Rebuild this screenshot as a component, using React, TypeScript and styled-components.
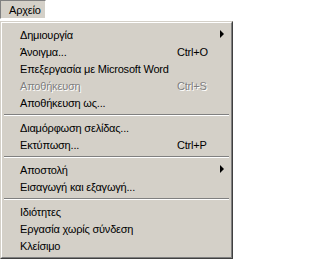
import styled, { createGlobalStyle } from "styled-components";

const GlobalStyle = createGlobalStyle`
  html, body {
    margin: 0;
    padding: 0;
    background: #ffffff;
  }
  body {
    font-family: "Liberation Sans", Arial, sans-serif;
    font-size: 11px;
    letter-spacing: -0.2px;
  }
`;

const Screen = styled.div`
  width: 233px;
  height: 259px;
  display: flex;
  flex-direction: column;
  overflow: hidden;
`;

const MenuTitle = styled.div`
  box-sizing: border-box;
  width: 46px;
  height: 19px;
  padding-left: 8px;
  display: flex;
  align-items: center;
  background: #d4d0c8;
  border-top: 1px solid #808080;
  border-left: 1px solid #808080;
  border-right: 1px solid #ffffff;
  border-bottom: 1px solid #ffffff;
  color: #000;
  margin-bottom: 2px;
`;

const Dropdown = styled.div`
  box-sizing: border-box;
  width: 233px;
  height: 238px;
  background: #d4d0c8;
  border-top: 1px solid #d4d0c8;
  border-left: 1px solid #d4d0c8;
  border-right: 1px solid #404040;
  border-bottom: 1px solid #404040;
  display: flex;
`;

const Inner = styled.div`
  flex: 1;
  border-top: 1px solid #ffffff;
  border-left: 1px solid #ffffff;
  border-right: 1px solid #808080;
  border-bottom: 1px solid #808080;
  padding: 3px 1px 2px 1px;
  display: flex;
  flex-direction: column;
`;

const Item = styled.div<{ $disabled?: boolean }>`
  height: 17px;
  display: grid;
  grid-template-columns: 157px 1fr 10px;
  align-items: center;
  padding-left: 17px;
  color: ${(p) => (p.$disabled ? "#808080" : "#000000")};
  text-shadow: ${(p) => (p.$disabled ? "1px 1px 0 #ffffff" : "none")};
  white-space: nowrap;
`;

const Label = styled.span`
  overflow: visible;
`;

const Shortcut = styled.span``;

const Arrow = styled.span`
  width: 0;
  height: 0;
  border-top: 4px solid transparent;
  border-bottom: 4px solid transparent;
  border-left: 4px solid #000;
  margin-top: -2px;
  justify-self: start;
`;

const Separator = styled.div`
  height: 8px;
  display: flex;
  flex-direction: column;
  justify-content: center;
  padding: 0 1px;

  &::before {
    content: "";
    display: block;
    height: 1px;
    background: #808080;
  }
  &::after {
    content: "";
    display: block;
    height: 1px;
    background: #ffffff;
  }
`;

type Entry =
  | { kind: "sep" }
  | { kind: "item"; label: string; shortcut?: string; submenu?: boolean; disabled?: boolean };

const entries: Entry[] = [
  { kind: "item", label: "Δημιουργία", submenu: true },
  { kind: "item", label: "Άνοιγμα...", shortcut: "Ctrl+O" },
  { kind: "item", label: "Επεξεργασία με Microsoft Word" },
  { kind: "item", label: "Αποθήκευση", shortcut: "Ctrl+S", disabled: true },
  { kind: "item", label: "Αποθήκευση ως..." },
  { kind: "sep" },
  { kind: "item", label: "Διαμόρφωση σελίδας..." },
  { kind: "item", label: "Εκτύπωση...", shortcut: "Ctrl+P" },
  { kind: "sep" },
  { kind: "item", label: "Αποστολή", submenu: true },
  { kind: "item", label: "Εισαγωγή και εξαγωγή..." },
  { kind: "sep" },
  { kind: "item", label: "Ιδιότητες" },
  { kind: "item", label: "Εργασία χωρίς σύνδεση" },
  { kind: "item", label: "Κλείσιμο" },
];

export default function App() {
  return (
    <>
      <GlobalStyle />
      <Screen>
        <MenuTitle>Αρχείο</MenuTitle>
        <Dropdown>
          <Inner>
            {entries.map((e, i) => {
              if (e.kind === "sep") return <Separator key={i} />;
              return (
                <Item key={i} $disabled={e.disabled}>
                  <Label>{e.label}</Label>
                  <Shortcut>{e.shortcut}</Shortcut>
                  {e.submenu ? <Arrow /> : <span />}
                </Item>
              );
            })}
          </Inner>
        </Dropdown>
      </Screen>
    </>
  );
}
